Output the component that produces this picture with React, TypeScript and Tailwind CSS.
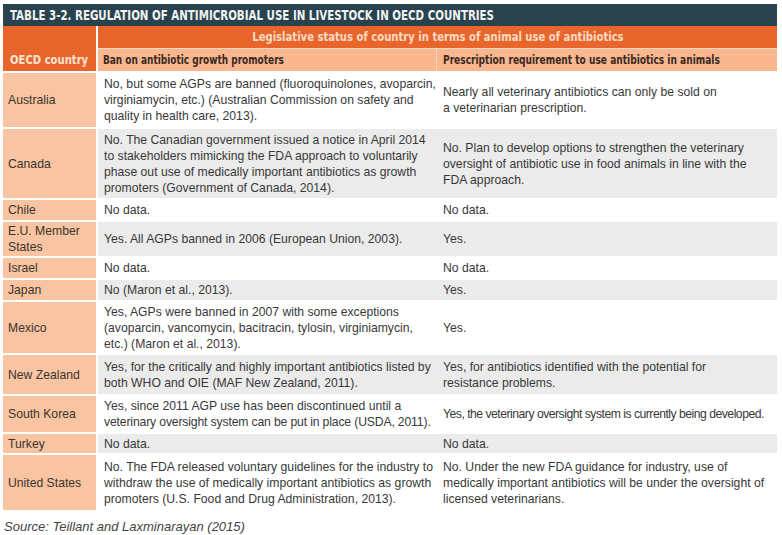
import React from "react";

type Row = {
  country: string[];
  ban: string[];
  rx: string[];
  h: string;
  gray: boolean;
  banClass?: string[];
  rxClass?: string;
};

const rows: Row[] = [
  {
    country: ["Australia"],
    ban: [
      "No, but some AGPs are banned (fluoroquinolones, avoparcin,",
      "virginiamycin, etc.) (Australian Commission on safety and",
      "quality in health care, 2013).",
    ],
    rx: ["Nearly all veterinary antibiotics can only be sold on", "a veterinarian prescription."],
    h: "h-[54px]",
    gray: false,
  },
  {
    country: ["Canada"],
    ban: [
      "No. The Canadian government issued a notice in April 2014",
      "to stakeholders mimicking the FDA approach to voluntarily",
      "phase out use of medically important antibiotics as growth",
      "promoters (Government of Canada, 2014).",
    ],
    rx: [
      "No. Plan to develop options to strengthen the veterinary",
      "oversight of antibiotic use in food animals in line with the",
      "FDA approach.",
    ],
    h: "h-[69px]",
    gray: true,
  },
  { country: ["Chile"], ban: ["No data."], rx: ["No data."], h: "h-[20px]", gray: false },
  {
    country: ["E.U. Member", "States"],
    ban: ["Yes. All AGPs banned in 2006 (European Union, 2003)."],
    rx: ["Yes."],
    h: "h-[34px]",
    gray: true,
  },
  { country: ["Israel"], ban: ["No data."], rx: ["No data."], h: "h-[20px]", gray: false },
  { country: ["Japan"], ban: ["No (Maron et al., 2013)."], rx: ["Yes."], h: "h-[20px]", gray: true },
  {
    country: ["Mexico"],
    ban: [
      "Yes, AGPs were banned in 2007 with some exceptions",
      "(avoparcin, vancomycin, bacitracin, tylosin, virginiamycin,",
      "etc.) (Maron et al., 2013).",
    ],
    rx: ["Yes."],
    h: "h-[51px]",
    gray: false,
  },
  {
    country: ["New Zealand"],
    ban: [
      "Yes, for the critically and highly important antibiotics listed by",
      "both WHO and OIE (MAF New Zealand, 2011).",
    ],
    rx: ["Yes, for antibiotics identified with the potential for", "resistance problems."],
    h: "h-[39px]",
    gray: true,
  },
  {
    country: ["South Korea"],
    ban: [
      "Yes, since 2011 AGP use has been discontinued until a",
      "veterinary oversight system can be put in place (USDA, 2011).",
    ],
    banClass: ["", "tracking-[-0.15px]"],
    rx: ["Yes, the veterinary oversight system is currently being developed."],
    rxClass: "tracking-[-0.5px]",
    h: "h-[36px]",
    gray: false,
  },
  { country: ["Turkey"], ban: ["No data."], rx: ["No data."], h: "h-[19px]", gray: true },
  {
    country: ["United States"],
    ban: [
      "No. The FDA released voluntary guidelines for the industry to",
      "withdraw the use of medically important antibiotics as growth",
      "promoters (U.S. Food and Drug Administration, 2013).",
    ],
    rx: [
      "No. Under the new FDA guidance for industry, use of",
      "medically important antibiotics will be under the oversight of",
      "licensed veterinarians.",
    ],
    h: "h-[55px]",
    gray: false,
  },
];

const cond = "font-['DejaVu_Sans_Condensed','DejaVu_Sans',sans-serif] font-bold whitespace-nowrap";

function Lines({ lines, className = "", lineClass = [] }: { lines: string[]; className?: string; lineClass?: string[] }) {
  return (
    <div className={`flex flex-col justify-center ${className}`}>
      {lines.map((l, i) => (
        <span key={i} className={`block whitespace-nowrap ${lineClass[i] ?? ""}`}>
          {l}
        </span>
      ))}
    </div>
  );
}

export default function App() {
  return (
    <div className="w-[782px] h-[535px] bg-white font-['Liberation_Sans',Arial,sans-serif] text-[#383838]">
      <div className="pt-[4px] pl-[3px] w-[777px]">
        {/* Title */}
        <div className="h-[22px] bg-[#28434e] pl-[7px] flex items-center">
          <span className={`inline-block origin-left scale-x-[0.815] text-[#f2f2f2] text-[14px] ${cond}`}>
            TABLE 3-2. REGULATION OF ANTIMICROBIAL USE IN LIVESTOCK IN OECD COUNTRIES
          </span>
        </div>

        {/* Header */}
        <div className="flex h-[45px] gap-[2px]">
          <div className="w-[93px] bg-[#e8652b] flex items-end pb-[2px] pl-[7px]">
            <span className={`inline-block origin-left scale-x-[0.86] text-[#fde4d2] text-[13px] ${cond}`}>
              OECD country
            </span>
          </div>
          <div className="flex-1 flex flex-col gap-[1px] bg-[#fad7c0]">
            <div className="h-[22px] bg-[#e8652b] flex items-center justify-center">
              <span className={`inline-block scale-x-[0.86] text-[#fcdcc4] text-[13px] ${cond}`}>
                Legislative status of country in terms of animal use of antibiotics
              </span>
            </div>
            <div className="flex-1 flex gap-[1px] text-[#3a2a22] text-[12px]">
              <div className="w-[338px] bg-[#f9b68f] pl-[5px] flex items-center">
                <span className={`inline-block origin-left scale-x-[0.83] ${cond}`}>Ban on antibiotic growth promoters</span>
              </div>
              <div className="flex-1 bg-[#f9b68f] pl-[6px] flex items-center">
                <span className={`inline-block origin-left scale-x-[0.84] ${cond}`}>
                  Prescription requirement to use antibiotics in animals
                </span>
              </div>
            </div>
          </div>
        </div>

        {/* Body */}
        <div className="flex flex-col gap-[2px] mt-[2px] text-[12.2px] leading-[16px]">
          {rows.map((r) => (
            <div key={r.country.join(" ")} className={`flex gap-[2px] ${r.h}`}>
              <Lines lines={r.country} className="w-[93px] bg-[#f8c4a1] pl-[5px] text-[#3d342e]" />
              <div className={`flex-1 flex ${r.gray ? "bg-[#ebebeb]" : "bg-white"}`}>
                <Lines lines={r.ban} lineClass={r.banClass} className="w-[339px] pl-[6px]" />
                <Lines lines={r.rx} className={`flex-1 pl-[6px] ${r.rxClass ?? ""}`} />
              </div>
            </div>
          ))}
        </div>
      </div>

      <div className="mt-[7px] pl-[4px] italic text-[13px] text-[#444]">Source: Teillant and Laxminarayan (2015)</div>
    </div>
  );
}
